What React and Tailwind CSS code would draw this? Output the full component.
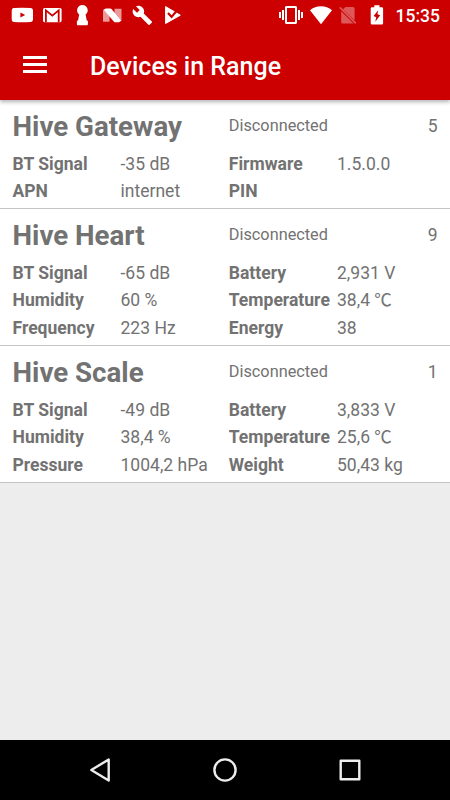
import React from "react";

const devices = [
  {
    name: "Hive Gateway",
    status: "Disconnected",
    count: 5,
    values: [
      ["BT Signal", "-35 dB", "Firmware", "1.5.0.0"],
      ["APN", "internet", "PIN", ""]
    ]
  },
  {
    name: "Hive Heart",
    status: "Disconnected",
    count: 9,
    values: [
      ["BT Signal", "-65 dB", "Battery", "2,931 V"],
      ["Humidity", "60 %", "Temperature", "38,4 ℃"],
      ["Frequency", "223 Hz", "Energy", "38"]
    ]
  },
  {
    name: "Hive Scale",
    status: "Disconnected",
    count: 1,
    values: [
      ["BT Signal", "-49 dB", "Battery", "3,833 V"],
      ["Humidity", "38,4 %", "Temperature", "25,6 ℃"],
      ["Pressure", "1004,2 hPa", "Weight", "50,43 kg"]
    ]
  }
];

const NotificationIcons = () => (
  <div className="flex gap-[6px]">
    {/* YouTube */}
    <svg className="h-6 w-6" viewBox="0 0 24 24" fill="#fff">
      <path fillRule="evenodd" d="M4 5Q12 4.4 20.5 5Q23 5.2 23 8V16Q23 18.8 20.5 19Q12 19.6 4 19Q1.7 18.8 1.7 16V8Q1.7 5.2 4 5zM10.4 9.4v5.2L15.2 12z" />
    </svg>
    {/* Gmail */}
    <svg className="h-6 w-6" viewBox="0 0 24 24">
      <rect x="3" y="5" width="18.6" height="14.2" rx="1.6" fill="#fff" />
      <path d="M5.9 19.2V7.4l6.4 5.2 6.4-5.2v11.8" fill="none" stroke="#c00" strokeWidth="1.8" />
    </svg>
    {/* keyhole */}
    <svg className="h-6 w-6" viewBox="0 0 24 24" fill="#fff">
      <path d="M12.4 2a5.3 5.3 0 0 1 3.2 9.5l1.1 5.7 1.2.8v3.3q0 .9-.9.9H7.8q-.9 0-.9-.9V18l1.2-.8 1.1-5.7A5.3 5.3 0 0 1 12.4 2z" />
    </svg>
    {/* Android N */}
    <svg className="h-6 w-6" viewBox="0 0 24 24" fill="#fff">
      <path opacity=".6" d="M3 7 5.5 5.7 9.5 10.3V18.8H3zM14.5 5.7H21.5V17.5L18.5 19.3 14.5 14.5z" />
      <path d="M5.8 5.5h4.5q.7 0 1.2.5l9.7 11.8-2.2 1.5h-3.8q-.7 0-1.2-.5L3.7 6.7z" />
    </svg>
    {/* wrench */}
    <svg className="h-6 w-6" viewBox="-2 -2 27.2 27.2" fill="#fff">
      <path d="M22.7 19l-9.1-9.1c.9-2.3.4-5-1.5-6.9-2-2-5-2.4-7.4-1.3L9 6 6 9 1.6 4.7C.4 7.1.9 10.1 2.9 12.1c1.9 1.9 4.6 2.4 6.9 1.5l9.1 9.1c.4.4 1 .4 1.4 0l2.3-2.3c.5-.4.5-1.1.1-1.4z" />
    </svg>
    {/* play store check */}
    <svg className="h-6 w-6" viewBox="0 0 24 24">
      <path d="M5.6 3.6 20.3 12.2 5.6 20.5z" fill="#fff" stroke="#fff" strokeLinejoin="round" />
      <path d="M8 9.9 11.6 13.9 18.8 5.3" fill="none" stroke="#c00" strokeWidth="2.2" />
    </svg>
  </div>
);

const SystemIcons = () => (
  <div className="flex items-center text-white">
    {/* vibrate */}
    <svg className="h-6 w-6" viewBox="0 0 24 24" fill="#fff">
      <path d="M0 15h2V9H0v6zm3 2h2V7H3v10zm19-8v6h2V9h-2zm-3 8h2V7h-2v10zM16.5 3h-9C6.67 3 6 3.67 6 4.5v15c0 .83.67 1.5 1.5 1.5h9c.83 0 1.5-.67 1.5-1.5v-15c0-.83-.67-1.5-1.5-1.5zM16 19H8V5h8v14z" />
    </svg>
    {/* wifi */}
    <svg className="ml-[6px] h-6 w-6" viewBox="0 0 24 24" fill="#fff">
      <path d="M12 21.2 1 7.2Q5.6 3.2 12 3.2T23 7.2z" />
    </svg>
    {/* no sim */}
    <svg className="ml-[3px] h-6 w-6" viewBox="0 0 24 24" fill="#fff" opacity=".35">
      <path d="M9.5 4H17q1.6 0 1.6 1.6V17.5L7 6.3zM5.2 8.3 17.5 20.5H6.8q-1.6 0-1.6-1.6z" />
      <path d="M3.8 4.4 19.8 20.4" stroke="#fff" strokeWidth="1.5" />
    </svg>
    {/* battery */}
    <svg className="ml-[5px] h-6 w-6" viewBox="0 0 24 24" fill="#fff">
      <path fillRule="evenodd" d="M9.3 2.2h5.2v2h2.2q1.4 0 1.4 1.4v14.6q0 1.4-1.4 1.4H7.1q-1.4 0-1.4-1.4V5.6q0-1.4 1.4-1.4h2.2zM13.2 7.2 8.6 13.1l2.6 1.1-.9 4.5 4.9-6.4-2.7-1.1z" />
    </svg>
    <span className="ml-[7px] pt-px text-[17.5px] leading-6 font-medium">15:35</span>
  </div>
);

const DeviceCard = ({ device }) => (
  <div className="border-b border-[#c4c4c4] bg-white px-[12.5px] pt-[10px] pb-[2.7px]">
    <div className="grid h-[40.6px] grid-cols-[208.3px_1fr_auto] items-start gap-x-[8px]">
      <h2 className="text-[27.7px] leading-[34px] font-bold whitespace-nowrap">{device.name}</h2>
      <span className="text-[16.3px] leading-[32px]">{device.status}</span>
      <span className="text-[17.5px] leading-[32px]">{device.count}</span>
    </div>
    {device.values.map(([label, value, label2, value2]) => (
      <div
        key={label}
        className="grid h-[27.5px] grid-cols-[100px_100.3px_100.2px_1fr] gap-x-[8px] text-[17.55px] leading-[27.5px] whitespace-nowrap"
      >
        <span className="font-bold">{label}</span>
        <span>{value}</span>
        <span className="font-bold">{label2}</span>
        <span>{value2}</span>
      </div>
    ))}
  </div>
);

const App = () => {
  return (
    <div className="flex h-screen w-full flex-col bg-[#ededed] font-[Roboto,'Noto_Sans_CJK_SC',sans-serif] text-[#727272]">
      <header className="relative h-[100px] shrink-0 bg-[#cc0000] shadow-[0_2px_4px_rgba(0,0,0,0.3)]">
        <div className="flex h-[30px] items-center justify-between px-[10px]">
          <NotificationIcons />
          <SystemIcons />
        </div>
        <div className="flex h-[70px] items-center pt-[3px] pl-[23px]">
          <button aria-label="Menu" className="mb-[4px] flex w-6 flex-col gap-1">
            <span className="h-[3px] bg-white" />
            <span className="h-[3px] bg-white" />
            <span className="h-[3px] bg-white" />
          </button>
          <h1 className="ml-[43px] text-[25px] font-medium text-white">Devices in Range</h1>
        </div>
      </header>

      <main className="flex-1">
        {devices.map((device) => (
          <DeviceCard key={device.name} device={device} />
        ))}
      </main>

      <nav className="flex h-[60px] shrink-0 items-center justify-between bg-black px-[87px]">
        <svg className="h-[26px] w-[26px]" viewBox="0 0 26 26" fill="none" stroke="#ededed" strokeWidth="2.4" strokeLinejoin="round">
          <path d="M21.7 2.5v21L4.3 13z" />
        </svg>
        <svg className="h-[26px] w-[26px]" viewBox="0 0 26 26" fill="none" stroke="#ededed" strokeWidth="2.4">
          <circle cx="13" cy="13" r="10.6" />
        </svg>
        <svg className="h-[26px] w-[26px]" viewBox="0 0 26 26" fill="none" stroke="#ededed" strokeWidth="2.4" strokeLinejoin="round">
          <rect x="3.7" y="3.7" width="18.6" height="18.6" />
        </svg>
      </nav>
    </div>
  );
};

export default App;
